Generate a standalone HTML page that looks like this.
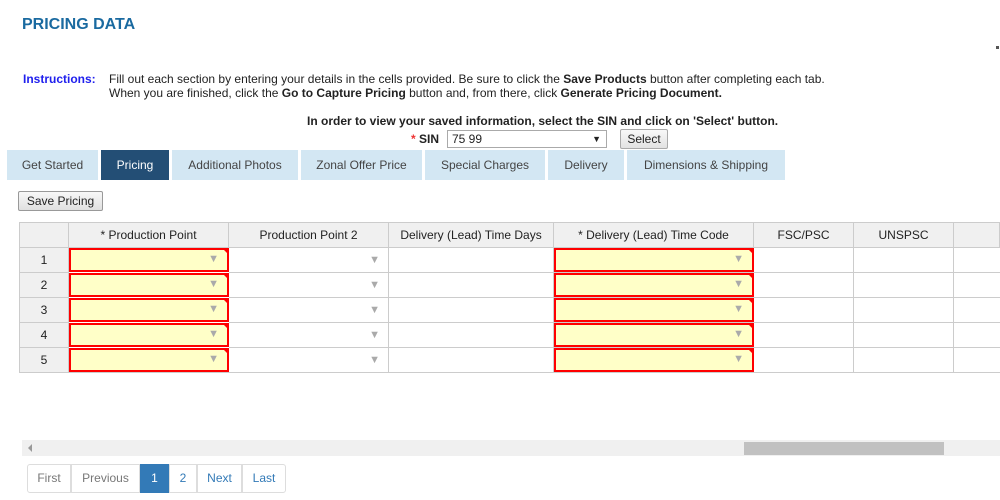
<!DOCTYPE html>
<html><head><style>
*{box-sizing:border-box;margin:0;padding:0}
body{width:1000px;height:500px;position:relative;background:#fff;font-family:"Liberation Sans",Arial,sans-serif;font-size:12px;color:#222;overflow:hidden}
.a{position:absolute}
.tab{position:absolute;top:150px;height:30px;background:#d3e7f3;color:#444;font-size:12px;line-height:30px;text-align:center}
.c{position:absolute;border-right:1px solid #ccc;border-bottom:1px solid #ccc;font-size:12px;text-align:center;line-height:24px;color:#222}
.h{background:#f0f0f0}
.rq{position:absolute;background:#ffffc8;border:2px solid #f00}
.rq:after{content:"";position:absolute;right:-2px;top:-2px;border-top:7px solid #f00;border-left:7px solid transparent}
.ar{position:absolute;color:#aaa;font-size:11px}
.pg{position:absolute;top:464px;height:29px;border:1px solid #ddd;line-height:27px;text-align:center;font-size:12px;color:#337ab7;margin-left:-1px}
</style></head><body>
<div class="a" style="left:22px;top:16px;font-size:16px;font-weight:bold;color:#1a6aa0">PRICING DATA</div>
<div class="a" style="left:996px;top:46px;width:3px;height:3px;background:#555"></div>
<div class="a" style="left:23px;top:72px;font-weight:bold;color:#2020ee">Instructions:</div>
<div class="a" style="left:109px;top:72px;line-height:14px">Fill out each section by entering your details in the cells provided. Be sure to click the <b>Save Products</b> button after completing each tab.<br>When you are finished, click the <b>Go to Capture Pricing</b> button and, from there, click <b>Generate Pricing Document.</b></div>
<div class="a" style="left:307px;top:114px;font-weight:bold">In order to view your saved information, select the SIN and click on 'Select' button.</div>
<div class="a" style="left:411px;top:132px;font-weight:bold"><span style="color:#e33">*</span> SIN</div>
<div class="a" style="left:447px;top:130px;width:160px;height:18px;border:1px solid #aaa;padding-left:4px;line-height:16px">75 99<span style="position:absolute;right:5px;font-size:9px">▼</span></div>
<div class="a" style="left:620px;top:129px;width:48px;height:20px;border:1px solid #aaa;border-radius:2px;background:linear-gradient(#f8f8f8,#e2e2e2);text-align:center;line-height:18px">Select</div>
<div class="tab" style="left:7px;width:91px">Get Started</div>
<div class="tab" style="left:101px;width:68px;background:#234e75;color:#fff">Pricing</div>
<div class="tab" style="left:172px;width:126px">Additional Photos</div>
<div class="tab" style="left:301px;width:121px">Zonal Offer Price</div>
<div class="tab" style="left:425px;width:120px">Special Charges</div>
<div class="tab" style="left:548px;width:76px">Delivery</div>
<div class="tab" style="left:627px;width:158px">Dimensions &amp; Shipping</div>
<div class="a" style="left:18px;top:191px;width:85px;height:20px;border:1px solid #999;border-radius:2px;background:linear-gradient(#f8f8f8,#e0e0e0);text-align:center;line-height:18px">Save Pricing</div>
<div class="a" style="left:19px;top:222px;width:981px;height:151px;border-left:1px solid #ccc;border-top:1px solid #ccc"></div>
<div class="c h" style="left:20px;top:223px;width:49px;height:25px"></div>
<div class="c h" style="left:69px;top:223px;width:160px;height:25px">* Production Point</div>
<div class="c h" style="left:229px;top:223px;width:160px;height:25px">Production Point 2</div>
<div class="c h" style="left:389px;top:223px;width:165px;height:25px">Delivery (Lead) Time Days</div>
<div class="c h" style="left:554px;top:223px;width:200px;height:25px">* Delivery (Lead) Time Code</div>
<div class="c h" style="left:754px;top:223px;width:100px;height:25px">FSC/PSC</div>
<div class="c h" style="left:854px;top:223px;width:100px;height:25px">UNSPSC</div>
<div class="c h" style="left:954px;top:223px;width:46px;height:25px"></div>
<div class="c h" style="left:20px;top:248px;width:49px;height:25px">1</div>
<div class="c h" style="left:20px;top:273px;width:49px;height:25px">2</div>
<div class="c h" style="left:20px;top:298px;width:49px;height:25px">3</div>
<div class="c h" style="left:20px;top:323px;width:49px;height:25px">4</div>
<div class="c h" style="left:20px;top:348px;width:49px;height:25px">5</div>
<div class="c" style="left:229px;top:248px;width:160px;height:25px"><span class="ar" style="right:8px;top:0">▼</span></div>
<div class="c" style="left:229px;top:273px;width:160px;height:25px"><span class="ar" style="right:8px;top:0">▼</span></div>
<div class="c" style="left:229px;top:298px;width:160px;height:25px"><span class="ar" style="right:8px;top:0">▼</span></div>
<div class="c" style="left:229px;top:323px;width:160px;height:25px"><span class="ar" style="right:8px;top:0">▼</span></div>
<div class="c" style="left:229px;top:348px;width:160px;height:25px"><span class="ar" style="right:8px;top:0">▼</span></div>
<div class="c" style="left:389px;top:248px;width:165px;height:125px;border-bottom:none"></div>
<div class="c" style="left:754px;top:248px;width:100px;height:125px;border-bottom:none"></div>
<div class="c" style="left:854px;top:248px;width:100px;height:125px;border-bottom:none"></div>
<div class="a" style="left:389px;top:272px;width:611px;height:1px;background:#ccc"></div>
<div class="a" style="left:389px;top:297px;width:611px;height:1px;background:#ccc"></div>
<div class="a" style="left:389px;top:322px;width:611px;height:1px;background:#ccc"></div>
<div class="a" style="left:389px;top:347px;width:611px;height:1px;background:#ccc"></div>
<div class="a" style="left:19px;top:372px;width:981px;height:1px;background:#ccc"></div>
<div class="rq" style="left:69px;top:248px;width:160px;height:24px"><span class="ar" style="right:8px;top:3px">▼</span></div>
<div class="rq" style="left:69px;top:273px;width:160px;height:24px"><span class="ar" style="right:8px;top:3px">▼</span></div>
<div class="rq" style="left:69px;top:298px;width:160px;height:24px"><span class="ar" style="right:8px;top:3px">▼</span></div>
<div class="rq" style="left:69px;top:323px;width:160px;height:24px"><span class="ar" style="right:8px;top:3px">▼</span></div>
<div class="rq" style="left:69px;top:348px;width:160px;height:24px"><span class="ar" style="right:8px;top:3px">▼</span></div>
<div class="rq" style="left:554px;top:248px;width:200px;height:24px"><span class="ar" style="right:8px;top:3px">▼</span></div>
<div class="rq" style="left:554px;top:273px;width:200px;height:24px"><span class="ar" style="right:8px;top:3px">▼</span></div>
<div class="rq" style="left:554px;top:298px;width:200px;height:24px"><span class="ar" style="right:8px;top:3px">▼</span></div>
<div class="rq" style="left:554px;top:323px;width:200px;height:24px"><span class="ar" style="right:8px;top:3px">▼</span></div>
<div class="rq" style="left:554px;top:348px;width:200px;height:24px"><span class="ar" style="right:8px;top:3px">▼</span></div>
<div class="a" style="left:22px;top:440px;width:978px;height:16px;background:#f0f0f0"></div>
<div class="a" style="left:28px;top:444px;border-right:4px solid #999;border-top:4px solid transparent;border-bottom:4px solid transparent"></div>
<div class="a" style="left:744px;top:442px;width:200px;height:13px;background:#c1c1c1"></div>
<div class="pg" style="left:28px;width:44px;color:#777;border-radius:3px 0 0 3px">First</div>
<div class="pg" style="left:72px;width:69px;color:#777">Previous</div>
<div class="pg" style="left:141px;width:29px;background:#337ab7;border-color:#337ab7;color:#fff">1</div>
<div class="pg" style="left:170px;width:28px">2</div>
<div class="pg" style="left:198px;width:45px">Next</div>
<div class="pg" style="left:243px;width:44px;border-radius:0 3px 3px 0">Last</div>
</body></html>
